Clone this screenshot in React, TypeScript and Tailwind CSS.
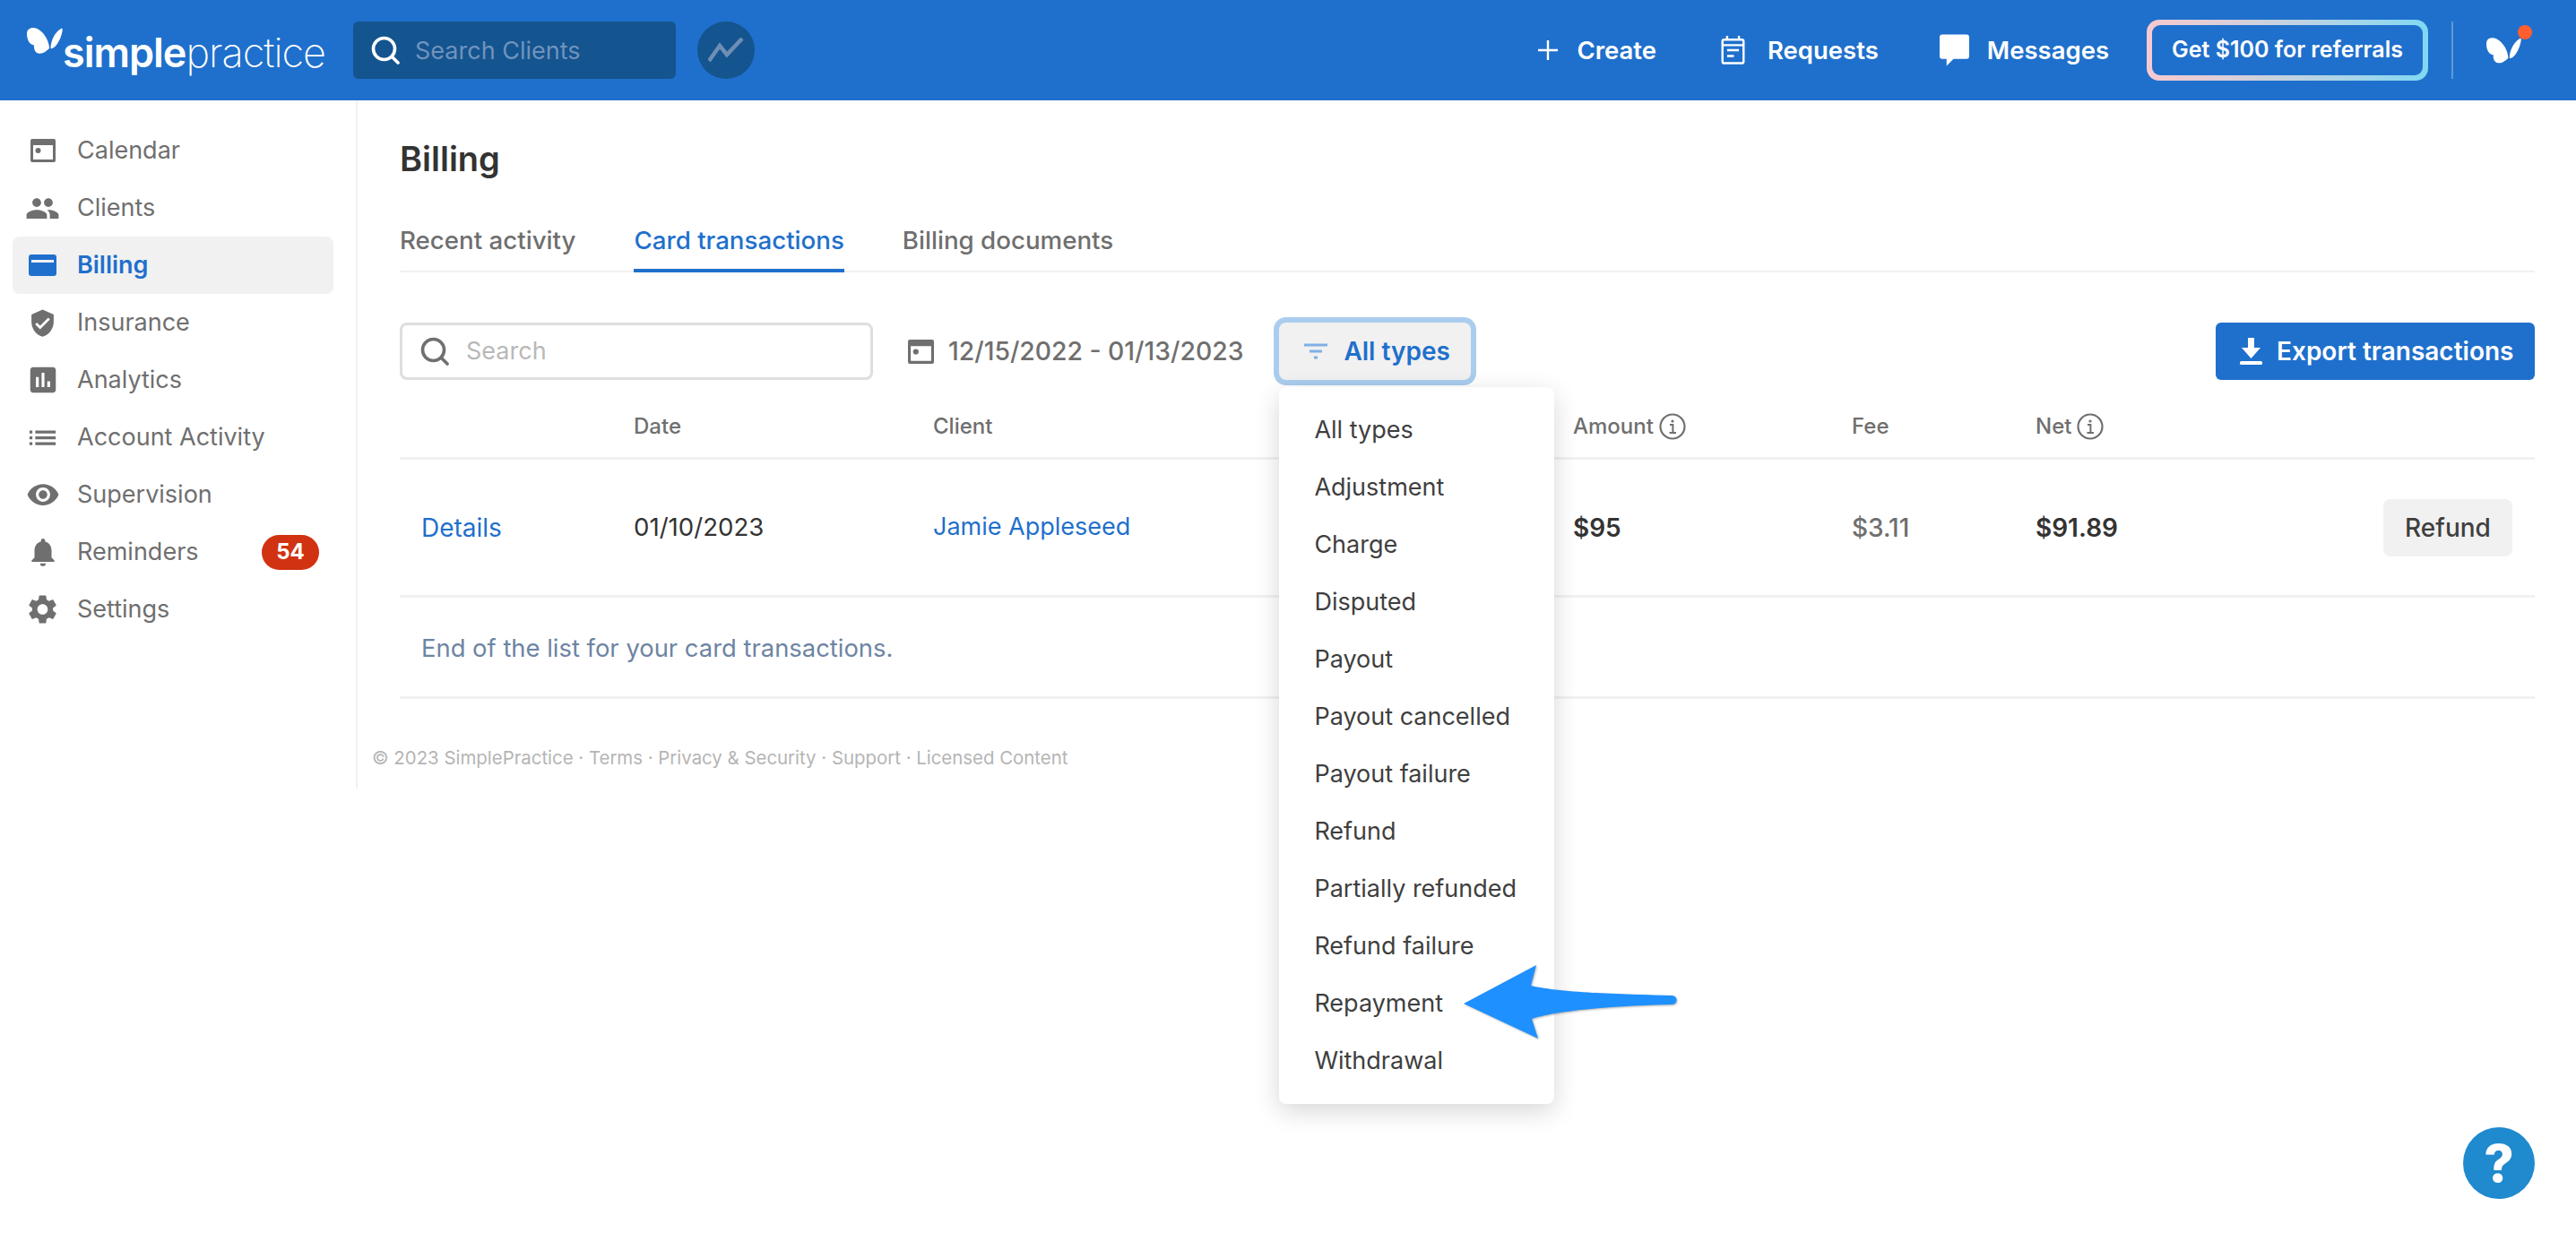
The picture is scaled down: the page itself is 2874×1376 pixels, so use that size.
import React from 'react';
import { MdPeople, MdVerifiedUser, MdAssessment, MdList, MdVisibility, MdNotifications, MdSettings } from 'react-icons/md';

const Butterfly = ({ className }: { className: string }) => (
  <svg viewBox="0 0 40 30" className={className} fill="currentColor">
    <path d="M0 8C0 3 3 1 7 1C13 1 19 7 22 13C24 17 25 21 25 24C22 27 18 30 14 29.7C10 29.5 7.5 26 8 20.5C3.5 20 0 15 0 8Z" />
    <path d="M26.5 24C26.5 16 31 6 38 2C40 1 40 3 39.5 5C38.5 10 37 14 35 17C33 21 29 25 26.5 24Z" />
  </svg>
);

const SearchIcon = ({ className }: { className: string }) => (
  <svg viewBox="0 0 32 32" className={className} fill="none" stroke="currentColor" strokeWidth="3.6">
    <circle cx="14.5" cy="14.5" r="12" />
    <path d="M23 23l7 7" strokeLinecap="round" />
  </svg>
);

const CalendarIcon = ({ className }: { className: string }) => (
  <svg viewBox="0 0 28 28" className={className}>
    <path fillRule="evenodd" fill="currentColor" d="M2 1h24a2 2 0 0 1 2 2v22a2 2 0 0 1-2 2H2a2 2 0 0 1-2-2V3a2 2 0 0 1 2-2zM3 8v16h22V8z" />
    <circle cx="8.5" cy="14" r="3" fill="currentColor" />
  </svg>
);

const CardIcon = ({ className }: { className: string }) => (
  <svg viewBox="0 0 31 24" className={className}>
    <path fillRule="evenodd" fill="currentColor" d="M3 0h25a3 3 0 0 1 3 3v18a3 3 0 0 1-3 3H3a3 3 0 0 1-3-3V3a3 3 0 0 1 3-3zM3 6v3h25V6z" />
  </svg>
);

const InfoIcon = () => (
  <svg viewBox="0 0 30 30" className="h-[30px] w-[30px] text-[#6f6f6f]" fill="none" stroke="currentColor">
    <circle cx="15" cy="15" r="13.5" strokeWidth="2.2" />
    <circle cx="15" cy="9" r="1.6" fill="currentColor" stroke="none" />
    <path d="M12 13h3.4v9M11.5 22h7.5" strokeWidth="2" />
  </svg>
);

const nav = [
  { label: 'Calendar', icon: <CalendarIcon className="h-[28px] w-[28px]" /> },
  { label: 'Clients', icon: <MdPeople className="h-[39px] w-[39px]" /> },
  { label: 'Billing', icon: <CardIcon className="h-[24px] w-[31px]" />, active: true },
  { label: 'Insurance', icon: <MdVerifiedUser className="h-[33px] w-[33px]" /> },
  { label: 'Analytics', icon: <MdAssessment className="h-[38px] w-[38px]" /> },
  { label: 'Account Activity', icon: <MdList className="h-[43px] w-[43px]" /> },
  { label: 'Supervision', icon: <MdVisibility className="h-[38px] w-[38px]" /> },
  { label: 'Reminders', icon: <MdNotifications className="h-[38px] w-[38px]" />, badge: '54' },
  { label: 'Settings', icon: <MdSettings className="h-[46px] w-[46px]" /> },
];

const menu = ['All types', 'Adjustment', 'Charge', 'Disputed', 'Payout', 'Payout cancelled', 'Payout failure', 'Refund', 'Partially refunded', 'Refund failure', 'Repayment', 'Withdrawal'];

export default function App() {
  return (
    <div className="relative h-[1376px] w-full overflow-hidden bg-white font-[Inter,sans-serif] text-[27px] text-[#6f6f6f]">
      <header className="flex h-[112px] items-center bg-[#1f70cc] pl-[30px] pr-[61px] text-white">
        <div className="flex w-[332px] items-start">
          <Butterfly className="mt-[2px] h-[30px] w-[40px] shrink-0" />
          <div className="mt-[6px] whitespace-nowrap text-[45px] leading-[50px] tracking-[-1px]">
            <span className="font-semibold">simple</span><span className="font-extralight">practice</span>
          </div>
        </div>
        <div className="ml-[32px] flex h-[64px] w-[360px] items-center rounded-[6px] bg-[#14548f] pl-[20px]">
          <SearchIcon className="h-[32px] w-[32px] text-white" />
          <span className="ml-[17px] pt-[2px] text-[#6f93bd]">Search Clients</span>
        </div>
        <div className="ml-[24px] flex h-[64px] w-[64px] items-center justify-center rounded-full bg-[#14548f]">
          <svg viewBox="0 0 40 28" className="h-[28px] w-[40px]" fill="none" stroke="#6f8eb5" strokeWidth="4.5">
            <path d="M1 26L13 9L21 19L38 1" />
          </svg>
        </div>
        <div className="ml-auto flex items-center text-[27.5px] font-semibold">
          <svg viewBox="0 0 24 24" className="h-[24px] w-[24px]" fill="none" stroke="currentColor" strokeWidth="2.4"><path d="M12 1v22M1 12h22" /></svg>
          <span className="ml-[20px] pt-[2px]">Create</span>
          <svg viewBox="0 0 28 34" className="ml-[72px] h-[32px] w-[27px]" fill="none" stroke="currentColor" strokeWidth="2.6">
            <rect x="1.5" y="4.5" width="25" height="28" rx="2" />
            <path d="M7 0v5M21 0v5M1.5 11h25M7 17h14M7 24h8" />
          </svg>
          <span className="ml-[25px] pt-[2px]">Requests</span>
          <svg viewBox="0 0 34 36" className="ml-[68px] h-[36px] w-[33px]" fill="currentColor">
            <path d="M3 0h28a3 3 0 0 1 3 3v22a3 3 0 0 1-3 3H16l-8 8v-8H3a3 3 0 0 1-3-3V3a3 3 0 0 1 3-3z" />
          </svg>
          <span className="ml-[20px] pt-[2px]">Messages</span>
          <div className="ml-[42px] h-[68px] w-[314px] rounded-[14px] bg-linear-to-r from-[#f7c9cf] to-[#7fd8f2] p-[6px]">
            <div className="flex h-full items-center justify-center rounded-[9px] bg-[#1f70cc] text-[25px]">Get $100 for referrals</div>
          </div>
          <div className="ml-[26px] h-[64px] w-[2px] bg-[#5f98d9]" />
          <div className="relative ml-[37px] h-[30px] w-[39px]">
            <Butterfly className="h-[30px] w-[39px]" />
            <span className="absolute -right-[12px] -top-[13px] h-[16px] w-[16px] rounded-full bg-[#ff5f2e]" />
          </div>
        </div>
      </header>

      <div className="flex h-[768px]">
        <aside className="w-[399px] shrink-0 border-r-2 border-[#f1f1f1] pt-[24px]">
          {nav.map((n) => (
            <div key={n.label} className={`ml-[14px] flex h-[64px] w-[358px] items-center rounded-[8px] pl-[14px] pr-[16px] ${n.active ? 'bg-[#f1f1f1] font-semibold text-[#1f70cc]' : ''}`}>
              <span className="flex w-[39px] shrink-0 items-center justify-center">{n.icon}</span>
              <span className="ml-[19px]">{n.label}</span>
              {n.badge && <span className="ml-auto flex h-[39px] w-[64px] items-center justify-center rounded-full bg-[#d13212] text-[24px] font-bold text-white">{n.badge}</span>}
            </div>
          ))}
        </aside>

        <main className="min-w-0 flex-1">
          <div className="pl-[47px] pr-[46px]">
            <h1 className="mt-[40px] h-[50px] text-[38px] font-semibold leading-[50px] text-[#333]">Billing</h1>
            <div className="mt-[32px] flex border-b-2 border-[#f1f1f1] text-[27.7px] font-medium">
              <div className="-mb-[2px] flex h-[70px] items-center">Recent activity</div>
              <div className="-mb-[2px] ml-[65px] flex h-[70px] items-center border-b-4 border-[#1f70cc] pt-[4px] text-[#1f70cc]">Card transactions</div>
              <div className="-mb-[2px] ml-[65px] flex h-[70px] items-center">Billing documents</div>
            </div>

            <div className="mt-[56px] flex h-[64px] items-center">
              <div className="flex h-[64px] w-[528px] items-center rounded-[8px] border-[3px] border-[#dedede] pl-[20px]">
                <SearchIcon className="h-[32px] w-[32px] text-[#6f6f6f]" />
                <span className="ml-[19px] text-[#b8b8b8]">Search</span>
              </div>
              <CalendarIcon className="ml-[39px] h-[29px] w-[29px] text-[#6f6f6f]" />
              <span className="ml-[16px] text-[28.3px] font-medium">12/15/2022 - 01/13/2023</span>
              <div className="relative ml-[40px] h-[64px] w-[214px] text-[28px]">
                <div className="flex h-full items-center rounded-[8px] bg-[#f1f1f1] pl-[28px] font-semibold text-[#1f70cc] ring-[6px] ring-[#aacdee]">
                  <svg viewBox="0 0 26 20" className="h-[20px] w-[26px]" fill="none" stroke="#7fb0e6" strokeWidth="3"><path d="M0 3h26M6 10h14M11 17h4" /></svg>
                  <span className="ml-[18px]">All types</span>
                </div>
                <div className="absolute left-0 top-[72px] z-10 w-[307px] rounded-[8px] bg-white py-[16px] text-[27px] text-[#3f3f3f] shadow-[0_8px_28px_rgba(0,0,0,0.16)]">
                  {menu.map((m) => (
                    <div key={m} className="flex h-[64px] items-center pl-[39px]">{m}</div>
                  ))}
                </div>
              </div>
              <div className="ml-auto flex h-[64px] w-[356px] items-center rounded-[6px] bg-[#1f70cc] pl-[27px] text-[28px] font-semibold text-white">
                <svg viewBox="0 0 25 30" className="h-[30px] w-[25px]" fill="currentColor">
                  <path d="M9 0h7v11h7L12.5 23 2 11h7z" />
                  <rect x="0" y="26" width="25" height="4" rx="1.5" />
                </svg>
                <span className="ml-[16px]">Export transactions</span>
              </div>
            </div>

            <div className="mt-[18px] grid h-[71px] grid-cols-[261px_334px_714px_311px_205px_1fr] items-center border-b-[3px] border-[#f1f1f1] text-[24px] font-medium">
              <span />
              <span>Date</span>
              <span>Client</span>
              <span className="flex items-center gap-[6px]">Amount <InfoIcon /></span>
              <span>Fee</span>
              <span className="flex items-center gap-[6px]">Net <InfoIcon /></span>
            </div>
            <div className="grid h-[154px] grid-cols-[261px_334px_714px_311px_205px_1fr] items-center border-b-[3px] border-[#f1f1f1] text-[28px]">
              <span className="pl-[24px] text-[#1f70cc]">Details</span>
              <span className="text-[27.6px] text-[#333]">01/10/2023</span>
              <span className="text-[27px] text-[#1f70cc]">Jamie Appleseed</span>
              <span className="font-semibold text-[#333]">$95</span>
              <span className="font-medium">$3.11</span>
              <span className="flex items-center justify-between pr-[25px]">
                <span className="font-semibold text-[#333]">$91.89</span>
                <span className="flex h-[64px] w-[144px] items-center justify-center rounded-[8px] bg-[#f1f1f1] font-medium text-[#3f3f3f]">Refund</span>
              </span>
            </div>
            <div className="flex h-[113px] items-center border-b-[3px] border-[#f1f1f1] pl-[24px] pt-[3px] text-[27.4px] text-[#6d84a3]">End of the list for your card transactions.</div>
          </div>
          <footer className="mt-[54px] pl-[16px] text-[20.4px] leading-[24px] text-[#b5b5b5]">© 2023 SimplePractice · Terms · Privacy &amp; Security · Support · Licensed Content</footer>
        </main>
      </div>

      <svg className="absolute left-[1630px] top-[1074px] z-20 h-[90px] w-[244px] drop-shadow-[1px_1px_1px_rgba(0,0,0,0.3)]" viewBox="0 0 244 90">
        <path fill="#1e90ff" d="M3 46L84 3L78 26C110 34 190 36 236 37C242 38 242 46 236 47C190 48 110 52 79 63L86 85Z" />
      </svg>

      <div className="absolute bottom-[38px] right-[46px] z-20 flex h-[80px] w-[80px] items-center justify-center rounded-full bg-[#1f8ace] text-[58px] font-extrabold leading-none text-white">?</div>
    </div>
  );
}
